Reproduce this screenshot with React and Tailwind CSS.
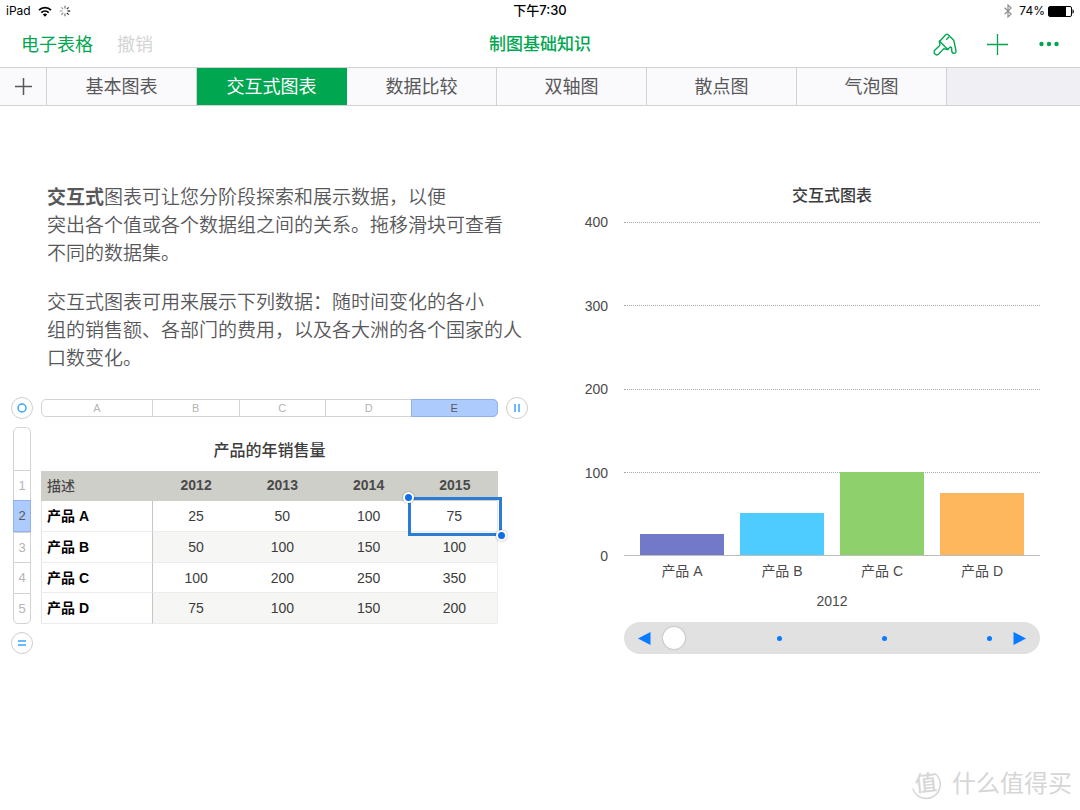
import React, { useState } from 'react';

const sheets = ['基本图表', '交互式图表', '数据比较', '双轴图', '散点图', '气泡图'];
const columns = ['A', 'B', 'C', 'D', 'E'];
const years = ['2012', '2013', '2014', '2015'];

const products = [
  { name: '产品 A', values: [25, 50, 100, 75], color: 'bg-[#7279c9]' },
  { name: '产品 B', values: [50, 100, 150, 100], color: 'bg-[#4fccff]' },
  { name: '产品 C', values: [100, 200, 250, 350], color: 'bg-[#8ed16c]' },
  { name: '产品 D', values: [75, 100, 150, 200], color: 'bg-[#ffb75e]' },
];

const StatusBar = () => (
  <div className="grid grid-cols-3 items-center h-[22px] px-1.5 font-['Inter','Noto_Sans_CJK_SC',sans-serif] text-xs text-black">
    <div className="flex items-center gap-[7px]">
      <span>iPad</span>
      <svg className="w-[14px] h-[11px]" viewBox="0 0 14 11" fill="none" stroke="black" strokeWidth="1.8">
        <path d="M1 4.1a8.6 8.6 0 0 1 12 0" />
        <path d="M3.3 6.6a5.3 5.3 0 0 1 7.4 0" />
        <path d="M7 10.8 4.8 8.5a3.2 3.2 0 0 1 4.4 0z" fill="black" stroke="none" />
      </svg>
      <svg className="w-3 h-3" viewBox="0 0 12 12" stroke="black" strokeWidth="1.1">
        <path d="M6 .8v2.7" opacity=".6" />
        <path d="M9.7 2.3 7.8 4.2" opacity=".8" />
        <path d="M11.2 6H8.5" />
        <path d="M9.7 9.7 7.8 7.8" opacity=".9" />
        <path d="M6 11.2V8.5" opacity=".6" />
        <path d="M2.3 9.7l1.9-1.9" opacity=".5" />
        <path d="M.8 6h2.7" opacity=".4" />
        <path d="M2.3 2.3l1.9 1.9" opacity=".4" />
      </svg>
    </div>
    <div className="text-center text-[13px] font-medium">下午7:30</div>
    <div className="flex items-center justify-end">
      <svg className="w-2 h-[14px] mr-[7px]" viewBox="0 0 8 14" fill="none" stroke="#8f8f8f" strokeWidth="1.2">
        <path d="M.6 3.8 7.2 10 4 13V1l3.2 3L.6 10.2" />
      </svg>
      <span className="mr-[3px]">74%</span>
      <svg className="w-[26px] h-[11px]" viewBox="0 0 26 11">
        <rect x=".5" y=".5" width="23" height="10" rx="1.5" fill="white" stroke="black" />
        <rect x="1" y="1" width="17" height="9" fill="black" />
        <path d="M24.5 3.2c1.800.6 1.800 4 0 4.600z" fill="black" />
      </svg>
    </div>
  </div>
);

const Toolbar = () => (
  <header className="grid grid-cols-3 items-center h-[45px] px-[21px]">
    <div className="flex gap-6 text-lg">
      <button className="text-[#00a650]">电子表格</button>
      <button className="text-[#d4d4d4]" disabled>撤销</button>
    </div>
    <h1 className="text-center text-[17px] font-medium text-[#00a650]">制图基础知识</h1>
    <div className="flex items-center justify-end text-[#00a650]">
      <button aria-label="格式" className="mr-[30px]">
        <svg className="w-6 h-6" viewBox="0 0 24 24" fill="none" stroke="currentColor" strokeWidth="1.4" strokeLinejoin="round" strokeLinecap="round">
          <path d="M13 1.600c.6-.6 1.300-.6 1.900 0l5.100 5c.6.6.9 1.300 1.100 2.100l1.900 9.100c.4 3.200-4 3.500-4.200.3l-.2-3c-.1-1.200-1.100-1.400-1.900-.6l-2 2L6.700 8.200z" />
          <path d="M6.700 8c-.8.9-.6 1.600 0 2.400.7 1 .4 1.700-.5 2.500l-4.200 4.100c-2.700 2.700 1.200 6.600 4 3.800l3.800-4.200c.8-.9 1.600-1.200 2.600-.6.9.6 1.800.7 2.400.3" />
          <path d="M13.700 6.300l2-2.100" />
        </svg>
      </button>
      <button aria-label="插入" className="mr-[31px]">
        <svg className="w-[21px] h-[21px]" viewBox="0 0 21 21" stroke="currentColor" strokeWidth="1.3">
          <path d="M10.500 0v21M0 10.500h21" />
        </svg>
      </button>
      <button aria-label="更多">
        <svg className="w-5 h-5" viewBox="0 0 20 20" fill="currentColor">
          <circle cx="2.500" cy="9" r="2.200" />
          <circle cx="10" cy="9" r="2.200" />
          <circle cx="17.500" cy="9" r="2.200" />
        </svg>
      </button>
    </div>
  </header>
);

const SheetTabs = ({ active, onSelect }) => (
  <nav className="flex h-[39px] border-y border-[#d2d2d4] bg-[#efeff4] text-lg text-[#58585a]">
    <button aria-label="添加工作表" className="flex items-center justify-center w-[47px] shrink-0 bg-[#fafafc] border-r border-[#d2d2d4]">
      <svg className="w-[17px] h-[17px]" viewBox="0 0 17 17" stroke="currentColor" strokeWidth="1.500">
        <path d="M8.500 0v17M0 8.500h17" />
      </svg>
    </button>
    {sheets.map((sheet) => (
      <button
        key={sheet}
        onClick={() => onSelect(sheet)}
        className={`w-[150px] border-r ${
          sheet === active ? 'bg-[#00a650] border-[#00a650] text-white' : 'bg-[#fafafc] border-[#d2d2d4]'
        }`}
      >
        {sheet}
      </button>
    ))}
  </nav>
);

const RoundHandle = ({ label, children }) => (
  <button
    aria-label={label}
    className="flex items-center justify-center w-[22px] h-[22px] rounded-full border border-[#cfcfcf] bg-white"
  >
    <svg className="w-[10px] h-[10px]" viewBox="0 0 10 10" fill="none" stroke="#3ba4fb" strokeWidth="1.500">
      {children}
    </svg>
  </button>
);

const SalesTable = () => (
  <div className="grid grid-cols-[22px_1fr_22px] gap-2 mt-6 pl-[11px] pr-3">
    <RoundHandle label="选择表格">
      <circle cx="5" cy="5" r="4" />
    </RoundHandle>

    {/* Column letters */}
    <div className="flex self-center h-[18px] rounded-[5px] border border-[#d3d3d3] text-[11px] leading-4 text-[#b5b5b5] text-center">
      {columns.map((col) => (
        <div
          key={col}
          className={
            col === 'A'
              ? 'w-[110px]'
              : col === 'E'
                ? 'flex-1 -m-px rounded-r-[5px] border border-[#8fb2ea] bg-[#adcbfd] text-[#58585a]'
                : 'flex-1 border-l border-[#d3d3d3]'
          }
        >
          {col}
        </div>
      ))}
    </div>
    <RoundHandle label="添加列">
      <path d="M3 1v8M7 1v8" />
    </RoundHandle>

    {/* Row numbers */}
    <div className="flex flex-col justify-self-center w-[18px] rounded-[5px] border border-[#d3d3d3] text-[13px] text-[#b5b5b5] text-center">
      <div className="h-[42px]"></div>
      {[1, 2, 3, 4, 5].map((row) => (
        <div
          key={row}
          className={`flex-1 flex items-center justify-center border-t ${
            row === 2 ? '-mx-px border border-[#8fb2ea] bg-[#adcbfd] text-[#58585a]' : 'border-[#d3d3d3]'
          }`}
        >
          {row}
        </div>
      ))}
    </div>

    <table className="w-full table-fixed border-separate border-spacing-0 text-sm text-center text-[#3c3c3c]">
      <caption className="h-11 pt-3 text-base leading-6 font-medium text-[#3c3c3c]">产品的年销售量</caption>
      <thead>
        <tr className="h-[30px] bg-[#cfcfca] text-[#4a4a4a]">
          <th scope="col" className="w-[112px] pl-1.5 text-left font-medium">描述</th>
          {years.map((year) => (
            <th key={year} scope="col" className="pb-0.5 font-bold">{year}</th>
          ))}
        </tr>
      </thead>
      <tbody>
        {products.map((product, row) => (
          <tr key={product.name} className={row === 2 ? 'h-[30px]' : 'h-[31px]'}>
            <th scope="row" className="pl-[5px] text-left font-bold text-black border-b border-l border-b-[#ececec] border-l-[#e4e4e4] border-r border-r-[#c6c6c6]">
              {product.name}
            </th>
            {product.values.map((value, col) => (
              <td
                key={years[col]}
                className={`relative border-b border-[#ececec] ${row % 2 ? 'bg-[#f6f6f4]' : ''} ${col === 3 ? 'border-r' : ''}`}
              >
                {value}
                {row === 0 && col === 3 && (
                  <div className="absolute z-10 -left-1 -top-1 -right-[5px] -bottom-[5px] border-3 border-[#2b7cd3]">
                    <span className="absolute -left-2 -top-2 w-[11px] h-[11px] rounded-full border-2 border-white bg-[#0f6fe8] shadow-[0_0_2px_rgba(0,0,0,0.4)]"></span>
                    <span className="absolute -right-2 -bottom-2 w-[11px] h-[11px] rounded-full border-2 border-white bg-[#0f6fe8] shadow-[0_0_2px_rgba(0,0,0,0.4)]"></span>
                  </div>
                )}
              </td>
            ))}
          </tr>
        ))}
      </tbody>
    </table>
    <div></div>

    <RoundHandle label="添加行">
      <path d="M1 3h8M1 7h8" />
    </RoundHandle>
  </div>
);

const InteractiveChart = () => {
  const [step, setStep] = useState(0);

  return (
    <section className="w-1/2 pr-10 grid grid-cols-[68px_1fr] gap-x-4 content-start text-sm leading-5 text-[#4a4a4a] text-center">
      <h2 className="col-start-2 mb-3.5 text-base leading-6 font-medium text-[#3c3c3c]">交互式图表</h2>

      <div className="col-start-1 flex flex-col justify-between -my-2.5 text-right">
        {[400, 300, 200, 100, 0].map((tick) => (
          <span key={tick}>{tick}</span>
        ))}
      </div>
      <div className="relative flex flex-col h-[334px] border-b border-[#bdbdbd]">
        {[400, 300, 200, 100].map((tick) => (
          <div key={tick} className="flex-1 border-t border-dotted border-[#a8a8a8]"></div>
        ))}
        <div className="absolute inset-0 flex items-end gap-4 px-4">
          {products.map((product) => (
            <div
              key={product.name}
              className={`flex-1 ${product.color}`}
              style={{ height: `${product.values[step] / 4}%` }}
            ></div>
          ))}
        </div>
      </div>

      <div className="col-start-2 flex gap-4 px-4 mt-[5px]">
        {products.map((product) => (
          <span key={product.name} className="flex-1">{product.name}</span>
        ))}
      </div>
      <label htmlFor="year" className="col-start-2 mt-2.5">{years[step]}</label>

      <div className="col-start-2 flex items-center gap-3 h-8 mt-[11px] pl-3.5 pr-3.5 rounded-full bg-[#e1e1e1]">
        <button aria-label="上一个" onClick={() => setStep(Math.max(0, step - 1))}>
          <svg className="w-[13px] h-[13px]" viewBox="0 0 13 13" fill="#0a7aff">
            <path d="M0 6.500 12.500 0v13z" />
          </svg>
        </button>
        <div className="relative flex-1 flex items-center h-[22px]">
          <div className="absolute inset-0 flex items-center justify-between px-[9px]">
            {years.map((year) => (
              <span key={year} className="w-[5px] h-[5px] rounded-full bg-[#0a7aff]"></span>
            ))}
          </div>
          <input
            id="year"
            type="range"
            min="0"
            max="3"
            value={step}
            onChange={(e) => setStep(Number(e.target.value))}
            className="relative w-full h-[22px] appearance-none bg-transparent [&::-webkit-slider-thumb]:appearance-none [&::-webkit-slider-thumb]:w-[22px] [&::-webkit-slider-thumb]:h-[22px] [&::-webkit-slider-thumb]:rounded-full [&::-webkit-slider-thumb]:bg-white [&::-webkit-slider-thumb]:shadow-[0_0_2px_rgba(0,0,0,0.35)]"
          />
        </div>
        <button aria-label="下一个" onClick={() => setStep(Math.min(3, step + 1))}>
          <svg className="w-[13px] h-[13px]" viewBox="0 0 13 13" fill="#0a7aff">
            <path d="M13 6.500.5 0v13z" />
          </svg>
        </button>
      </div>
    </section>
  );
};

const App = () => {
  const [activeSheet, setActiveSheet] = useState('交互式图表');

  return (
    <div className="flex flex-col min-h-screen bg-white font-['Liberation_Sans','Noto_Sans_CJK_SC',sans-serif]">
      <StatusBar />
      <Toolbar />
      <SheetTabs active={activeSheet} onSelect={setActiveSheet} />

      <main className="flex pt-[78px]">
        <section className="w-1/2">
          <div className="pl-[47px] space-y-[21px] text-[19px] leading-7 font-[350] text-[#58585a] whitespace-nowrap">
            <p>
              <b className="font-bold">交互式</b>图表可让您分阶段探索和展示数据，以便<br />
              突出各个值或各个数据组之间的关系。拖移滑块可查看<br />
              不同的数据集。
            </p>
            <p>
              交互式图表可用来展示下列数据：随时间变化的各小<br />
              组的销售额、各部门的费用，以及各大洲的各个国家的人<br />
              口数变化。
            </p>
          </div>
          <SalesTable />
        </section>
        <InteractiveChart />
      </main>

      <footer className="flex items-center justify-end gap-2.5 mt-auto pr-2 pb-2.5 text-[#d6d6d6]">
        <div className="relative flex items-center justify-center w-8 h-8">
          <svg className="absolute inset-0 w-8 h-8" viewBox="0 0 32 32" fill="none" stroke="currentColor" strokeWidth="1.500" strokeLinecap="round">
            <path d="M25 5.500A14 14 0 1 1 3 21" />
          </svg>
          <span className="text-[22px] leading-8 font-medium -rotate-6">值</span>
        </div>
        <span className="text-2xl leading-8">什么值得买</span>
      </footer>
    </div>
  );
};

export default App;
